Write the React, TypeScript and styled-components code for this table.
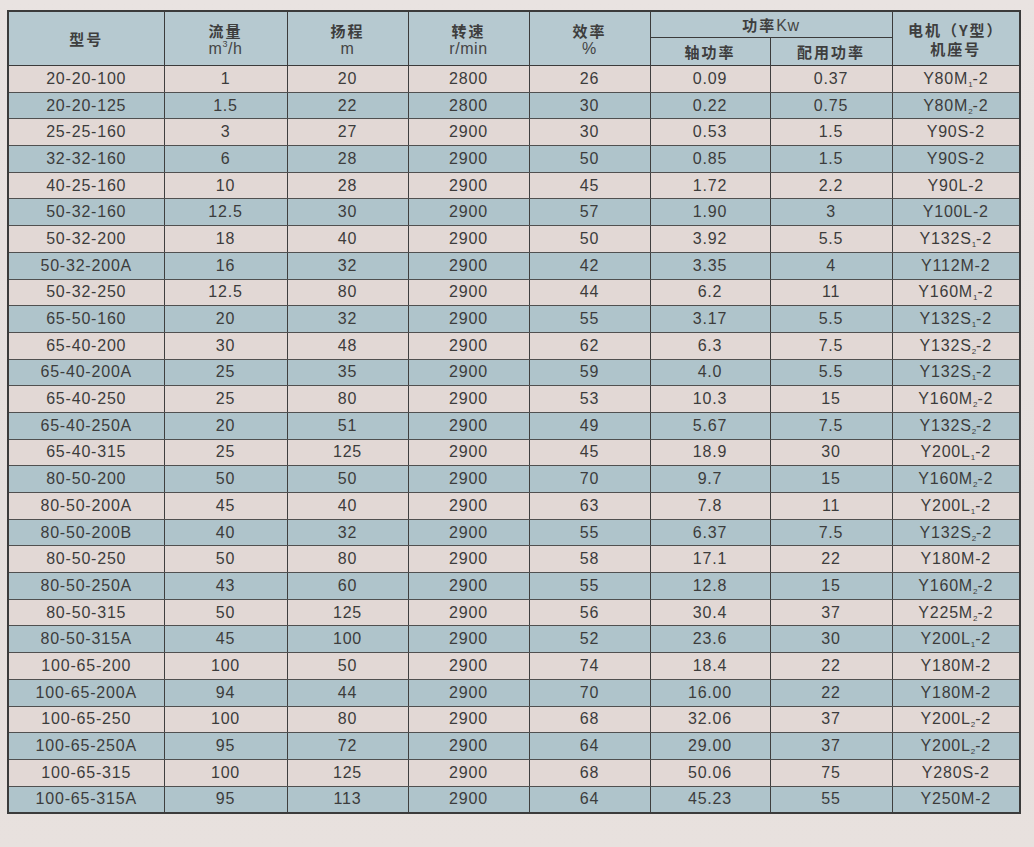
import React from "react";
import styled, { createGlobalStyle } from "styled-components";

const Global = createGlobalStyle`
  html, body {
    margin: 0;
    padding: 0;
    background: #e6e0de;
  }
  body {
    font-family: "Liberation Sans", Arial, sans-serif;
    color: #3a3a3a;
  }
`;

const Page = styled.div`
  width: 1034px;
  height: 847px;
  box-sizing: border-box;
  padding: 10px 0 0 7px;
  background: linear-gradient(180deg, #e9e3e1 0%, #e5dfdd 60%, #e8e1de 100%);
  overflow: hidden;
`;

const Table = styled.table`
  border-collapse: collapse;
  table-layout: fixed;
  width: 1012px;
  border: 2px solid #3b3b3b;
`;

const HeadCell = styled.th<{ $h?: number }>`
  background: #b6c9d0;
  border: 1.5px solid #3b3b3b;
  font-family: "Noto Sans CJK SC", "Liberation Sans", sans-serif;
  font-weight: 700;
  font-size: 15px;
  letter-spacing: 2px;
  color: #3e3e3e;
  line-height: 19px;
  padding: 0;
  height: ${(p) => p.$h ?? 26}px;
  text-align: center;
  vertical-align: middle;
`;

const Unit = styled.span<{ $inline?: boolean }>`
  display: ${(p) => (p.$inline ? "inline" : "block")};
  font-family: "Liberation Sans", Arial, sans-serif;
  font-weight: 400;
  font-size: 16px;
  letter-spacing: 0.6px;
  line-height: 17px;
  color: #454545;
`;

const Sup = styled.sup`
  font-size: 9px;
  vertical-align: 7px;
  line-height: 0;
`;

const Row = styled.tr<{ $alt: boolean }>`
  height: 26.7px;
  background: ${(p) => (p.$alt ? "#afc4cb" : "#e2d8d5")};
`;

const Cell = styled.td`
  border: 1.5px solid #3f3f3f;
  border-top-color: #505050;
  border-bottom-color: #505050;
  padding: 0;
  text-align: center;
  vertical-align: middle;
  font-size: 16px;
  letter-spacing: 0.8px;
  color: #3c3c3c;
  line-height: 18px;
`;

const Sub = styled.sub`
  font-size: 8px;
  vertical-align: -3px;
  line-height: 0;
  letter-spacing: 0;
`;

type R = [string, string, string, string, string, string, string, string, string];

const rows: R[] = [
  ["20-20-100", "1", "20", "2800", "26", "0.09", "0.37", "Y80M", "1"],
  ["20-20-125", "1.5", "22", "2800", "30", "0.22", "0.75", "Y80M", "2"],
  ["25-25-160", "3", "27", "2900", "30", "0.53", "1.5", "Y90S", ""],
  ["32-32-160", "6", "28", "2900", "50", "0.85", "1.5", "Y90S", ""],
  ["40-25-160", "10", "28", "2900", "45", "1.72", "2.2", "Y90L", ""],
  ["50-32-160", "12.5", "30", "2900", "57", "1.90", "3", "Y100L", ""],
  ["50-32-200", "18", "40", "2900", "50", "3.92", "5.5", "Y132S", "1"],
  ["50-32-200A", "16", "32", "2900", "42", "3.35", "4", "Y112M", ""],
  ["50-32-250", "12.5", "80", "2900", "44", "6.2", "11", "Y160M", "1"],
  ["65-50-160", "20", "32", "2900", "55", "3.17", "5.5", "Y132S", "1"],
  ["65-40-200", "30", "48", "2900", "62", "6.3", "7.5", "Y132S", "2"],
  ["65-40-200A", "25", "35", "2900", "59", "4.0", "5.5", "Y132S", "1"],
  ["65-40-250", "25", "80", "2900", "53", "10.3", "15", "Y160M", "2"],
  ["65-40-250A", "20", "51", "2900", "49", "5.67", "7.5", "Y132S", "2"],
  ["65-40-315", "25", "125", "2900", "45", "18.9", "30", "Y200L", "1"],
  ["80-50-200", "50", "50", "2900", "70", "9.7", "15", "Y160M", "2"],
  ["80-50-200A", "45", "40", "2900", "63", "7.8", "11", "Y200L", "1"],
  ["80-50-200B", "40", "32", "2900", "55", "6.37", "7.5", "Y132S", "2"],
  ["80-50-250", "50", "80", "2900", "58", "17.1", "22", "Y180M", ""],
  ["80-50-250A", "43", "60", "2900", "55", "12.8", "15", "Y160M", "2"],
  ["80-50-315", "50", "125", "2900", "56", "30.4", "37", "Y225M", "2"],
  ["80-50-315A", "45", "100", "2900", "52", "23.6", "30", "Y200L", "1"],
  ["100-65-200", "100", "50", "2900", "74", "18.4", "22", "Y180M", ""],
  ["100-65-200A", "94", "44", "2900", "70", "16.00", "22", "Y180M", ""],
  ["100-65-250", "100", "80", "2900", "68", "32.06", "37", "Y200L", "2"],
  ["100-65-250A", "95", "72", "2900", "64", "29.00", "37", "Y200L", "2"],
  ["100-65-315", "100", "125", "2900", "68", "50.06", "75", "Y280S", ""],
  ["100-65-315A", "95", "113", "2900", "64", "45.23", "55", "Y250M", ""],
];

const widths = [156, 123, 121, 121, 121, 120, 122, 128];

export default function App() {
  return (
    <Page>
      <Global />
      <Table>
        <colgroup>
          {widths.map((w, i) => (
            <col key={i} style={{ width: w }} />
          ))}
        </colgroup>
        <thead>
          <tr>
            <HeadCell rowSpan={2} $h={25}>型号</HeadCell>
            <HeadCell rowSpan={2} $h={25}>
              流量
              <Unit>
                m<Sup>3</Sup>/h
              </Unit>
            </HeadCell>
            <HeadCell rowSpan={2} $h={25}>
              扬程
              <Unit>m</Unit>
            </HeadCell>
            <HeadCell rowSpan={2} $h={25}>
              转速
              <Unit>r/min</Unit>
            </HeadCell>
            <HeadCell rowSpan={2} $h={25}>
              效率
              <Unit>%</Unit>
            </HeadCell>
            <HeadCell colSpan={2} $h={25}>
              功率<Unit $inline>Kw</Unit>
            </HeadCell>
            <HeadCell rowSpan={2} $h={25}>
              电机（Y型）
              <br />
              机座号
            </HeadCell>
          </tr>
          <tr>
            <HeadCell $h={27}>轴功率</HeadCell>
            <HeadCell $h={27}>配用功率</HeadCell>
          </tr>
        </thead>
        <tbody>
          {rows.map((r, i) => (
            <Row key={r[0]} $alt={i % 2 === 1}>
              {r.slice(0, 7).map((v, j) => (
                <Cell key={j}>{v}</Cell>
              ))}
              <Cell>
                {r[7]}
                {r[8] && <Sub>{r[8]}</Sub>}
                -2
              </Cell>
            </Row>
          ))}
        </tbody>
      </Table>
    </Page>
  );
}
